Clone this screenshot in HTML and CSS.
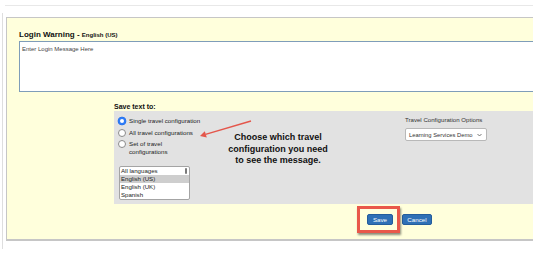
FILE: index.html
```html
<!DOCTYPE html>
<html lang="en">

<head>
    <meta charset="UTF-8">
    <meta name="viewport" content="width=device-width, initial-scale=1.0">
    <title>Login Warning</title>
    <link rel="stylesheet" href="styles.css">
</head>

<body>
    <div class="top-line"></div>
    <div class="frame">
        <div class="panel">
            <h2 class="title">Login Warning - <span class="title-lang">English (US)</span></h2>
            <div class="message-box">Enter Login Message Here</div>

            <div class="save-section">
                <div class="save-label">Save text to:</div>

                <div class="save-box">
                    <div class="col-targets">
                        <div class="radio-row">
                            <span class="radio checked"></span>
                            <span class="radio-label">Single travel configuration</span>
                        </div>
                        <div class="radio-row">
                            <span class="radio"></span>
                            <span class="radio-label">All travel configurations</span>
                        </div>
                        <div class="radio-row">
                            <span class="radio"></span>
                            <span class="radio-label">Set of travel<br>configurations</span>
                        </div>

                        <div class="lang-list">
                            <div class="lang-item">All languages</div>
                            <div class="lang-item selected">English (US)</div>
                            <div class="lang-item">English (UK)</div>
                            <div class="lang-item">Spanish</div>
                        </div>
                    </div>

                    <div class="col-note">
                        Choose which travel<br>
                        configuration you need<br>
                        to see the message.
                    </div>

                    <div class="col-config">
                        <div class="config-label">Travel Configuration Options</div>
                        <div class="config-select">
                            <span>Learning Services Demo</span>
                            <svg width="5" height="4" viewBox="0 0 5 4">
                                <polyline points="0.5,1 2.5,3 4.5,1" fill="none" stroke="#555" stroke-width="0.8" />
                            </svg>
                        </div>
                    </div>

                    <!-- annotation arrow -->
                    <svg class="note-arrow" width="200" height="60" viewBox="0 0 200 60">
                        <line x1="137" y1="10" x2="91.5" y2="23.4" stroke="#e4564b" stroke-width="1.5" />
                        <polygon points="86,25 92.8,26.4 90.8,20.2" fill="#e4564b" />
                    </svg>
                </div>

                <div class="button-row">
                    <span class="save-wrap">
                        <button class="btn">Save</button>
                        <span class="highlight"></span>
                    </span>
                    <button class="btn btn-cancel">Cancel</button>
                </div>
            </div>
        </div>
    </div>
</body>

</html>
```

FILE: styles.css
```css
body {
    margin: 0;
    background: white;
    font-family: 'Liberation Sans', Arial, Helvetica, sans-serif;
    color: #111;
}

.top-line {
    height: 1px;
    margin: 5px 0 0 5px;
    background: #e8e8e8;
}

.frame {
    margin: 7px 0 0 2px;
    padding-top: 4px;
    border-left: 1px solid #dedede;
    min-height: calc(100vh - 17px);
    box-sizing: border-box;
    overflow: hidden;
}

.panel {
    width: 580px;
    margin-left: 3px;
    padding: 12px 0 14px 12px;
    box-sizing: border-box;
    background: #ffffdc;
    border: 1px solid #c6c6c6;
    border-bottom-width: 2px;
}

.title {
    margin: 0;
    font-size: 8px;
    line-height: 10px;
    font-weight: bold;
}

.title-lang {
    font-size: 6px;
}

.message-box {
    margin-top: 1px;
    height: 51px;
    box-sizing: border-box;
    padding: 4px 2px;
    background: white;
    border: 1px solid #7f9db9;
    font-size: 6px;
    color: #444;
}

.save-section {
    margin-left: 95px;
}

.save-label {
    margin-top: 10px;
    font-size: 7px;
    line-height: 9px;
    font-weight: bold;
}

.save-box {
    position: relative;
    display: grid;
    grid-template-columns: 100px 120px auto;
    height: 93px;
    box-sizing: border-box;
    padding-left: 4px;
    background: #e2e2e2;
}

.col-targets {
    padding-top: 6px;
}

.radio-row {
    display: flex;
    align-items: flex-start;
    gap: 3px;
    margin-bottom: 3.7px;
    font-size: 6.2px;
    line-height: 7.5px;
    color: #222;
}

.radio {
    flex: none;
    width: 8px;
    height: 8px;
    box-sizing: border-box;
    border-radius: 50%;
    border: 1px solid #8a8a8a;
    background: white;
}

.radio.checked {
    border: 2.5px solid #2f7cf6;
    background: white;
    box-shadow: 0 0 0 0.3px #1e62d0;
}

.radio-label {
    white-space: nowrap;
}

.lang-list {
    position: relative;
    margin: 11px 0 0 1px;
    width: 71px;
    box-sizing: border-box;
    border: 1px solid #a4a4a4;
    border-radius: 2px;
    background: white;
    font-size: 6.1px;
    line-height: 7.8px;
    color: #222;
}

.lang-list::after {
    content: "";
    position: absolute;
    right: 2px;
    top: 1px;
    width: 2.5px;
    height: 6px;
    border-radius: 2px;
    background: #7a7a7a;
}

.lang-item {
    padding-left: 1px;
}

.lang-item.selected {
    background: #cecece;
}

.col-note {
    padding-top: 21px;
    text-align: center;
    font-size: 9px;
    line-height: 11.5px;
    font-weight: bold;
    color: #111;
}

.col-config {
    margin-left: 67px;
    padding-top: 5px;
}

.config-label {
    font-size: 6.1px;
    line-height: 8px;
    color: #333;
    white-space: nowrap;
}

.config-select {
    margin-top: 4px;
    width: 82px;
    height: 13px;
    box-sizing: border-box;
    display: flex;
    align-items: center;
    justify-content: space-between;
    padding: 0 4px 0 3px;
    background: white;
    border: 1px solid #b8b8b8;
    border-radius: 2px;
    font-size: 5.8px;
    color: #333;
    white-space: nowrap;
}

.note-arrow {
    position: absolute;
    left: 0;
    top: 0;
}

.button-row {
    display: flex;
    gap: 9px;
    margin-top: 10px;
    padding-left: 253px;
}

.save-wrap {
    position: relative;
    display: flex;
}

.btn {
    height: 11px;
    width: 26px;
    padding: 0;
    box-sizing: border-box;
    background: #2f70b6;
    border: 1px solid #245d9c;
    border-radius: 2px;
    color: white;
    font-family: inherit;
    font-size: 6.2px;
    line-height: 9px;
}

.btn-cancel {
    width: 30px;
}

.highlight {
    position: absolute;
    left: -10px;
    top: -8px;
    width: 43px;
    height: 27px;
    box-sizing: border-box;
    border: 3px solid #e9584a;
    box-shadow: 1px 2px 2px rgba(0, 0, 0, 0.45);
}
```
